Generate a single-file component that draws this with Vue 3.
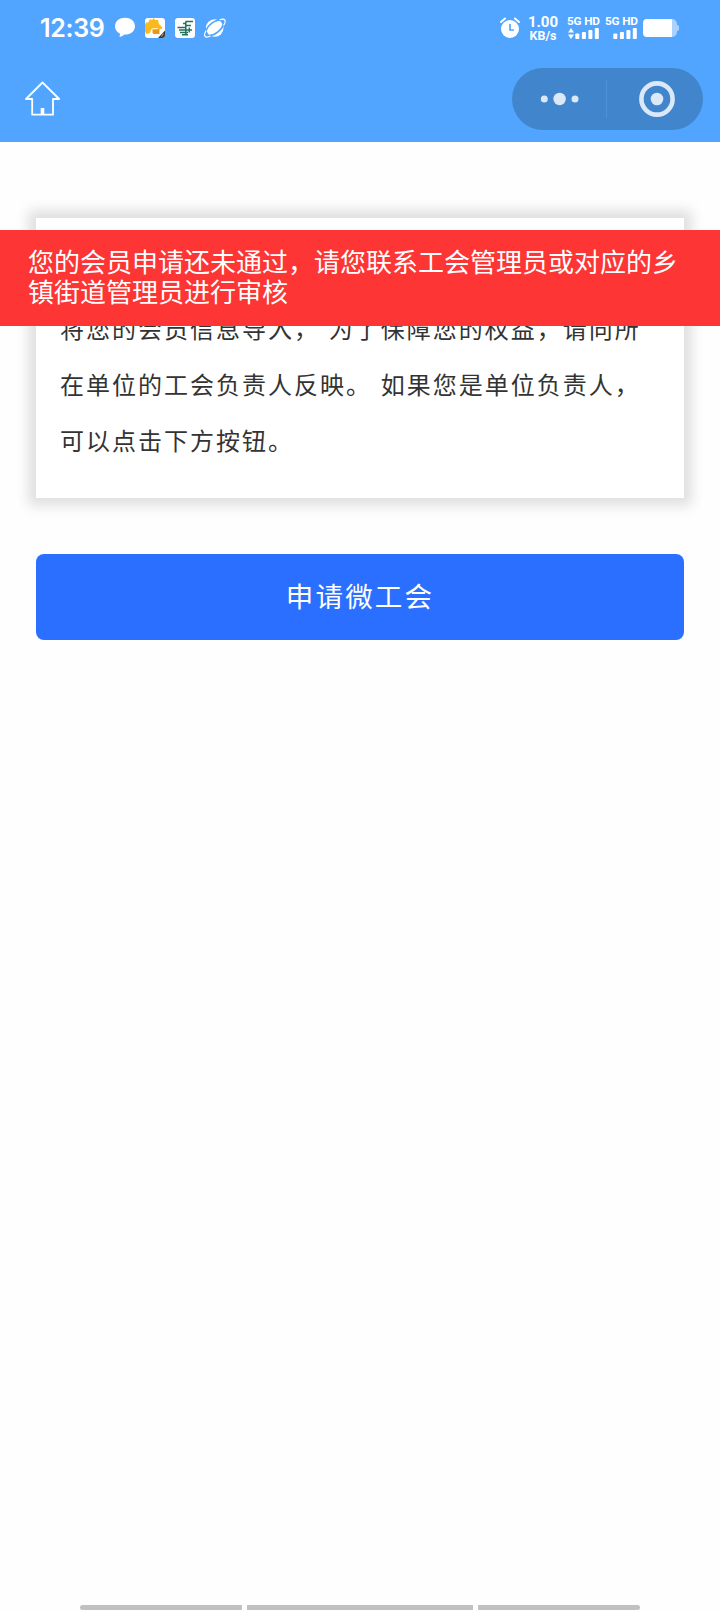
<script setup>
  import { ref } from 'vue';

  const emit = defineEmits(['goHome', 'apply']);

  const time = ref('12:39');
  const speed = ref({ value: '1.00', unit: 'KB/s' });
  const toast = ref('您的会员申请还未通过，请您联系工会管理员或对应的乡镇街道管理员进行审核');
  const notice = [
    '将您的会员信息导入， 为了保障您的权益，请向所',
    '在单位的工会负责人反映。 如果您是单位负责人，',
    '可以点击下方按钮。',
  ];
</script>

<template>
  <div class="page">
    <header class="header">
      <div class="status">
        <span class="status__time">{{ time }}</span>
        <svg class="status__apps" width="112" height="24" viewBox="0 0 112 24">
          <path d="M10 1.800C4.500 1.800 0 5.300 0 10.200c0 3.600 2.200 6.200 5 7.500l-.4 3.300c2-.5 3.700-1.500 4.800-2.500C15.600 18.700 20 15.200 20 10.200 20 5.300 15.500 1.800 10 1.800z" fill="#fff" />
          <rect x="30" y="2" width="20" height="20" rx="3" fill="#fff" />
          <path d="M30 8l2-2 1 1 2-4 2 1 2-2 1 2h3l1 4 3 3v2h-7l-4 1-1 3-4 1-1-3z" fill="#f9b91f" />
          <path d="M37.500 13.500l7-.5v5h-6l-1-1.500z" fill="#f0951c" />
          <path d="M36 14l2-1.500h5" fill="none" stroke="#fff0b8" stroke-width="1" />
          <path d="M50 14.500V19a3 3 0 0 1-3 3h-4z" fill="#3c3432" />
          <path d="M46.500 20.500l2-3" stroke="#a1988e" stroke-width="1.200" />
          <rect x="60" y="2" width="20" height="20" rx="3" fill="#fff" />
          <path d="M70.500 5.500H78M68 7.500h3M70 9.500h6M62.500 11.500h9M64 14h13M65 16.500h8M67 18.800h6M70.800 5.500v13M74.300 11.500v5" fill="none" stroke="#22725b" stroke-width="1.500" />
          <circle cx="99.700" cy="12" r="8.800" fill="#fff" />
          <path d="M92.500 19.500C99 20.500 108.500 13.500 108.500 6" fill="none" stroke="#52a5ff" stroke-width="1.700" />
          <path d="M91 16.500C91 11 98 4.500 105 4" fill="none" stroke="#52a5ff" stroke-width="1.500" />
          <path d="M91.200 14.500C87.500 20.500 90.500 22.500 95.500 20M104.500 3.800C110.500 1.500 111.500 5 108.500 9.500" fill="none" stroke="#fff" stroke-width="1.200" />
        </svg>

        <svg class="status__alarm" width="20" height="22" viewBox="0 0 20 22">
          <circle cx="10" cy="12" r="9" fill="#fff" />
          <path d="M1 5l4-3.500M19 5l-4-3.500" stroke="#fff" stroke-width="2" stroke-linecap="round" />
          <path d="M10 7v6h4" fill="none" stroke="#52a5ff" stroke-width="1.700" />
        </svg>
        <span class="status__speed">
          <b>{{ speed.value }}</b>
          <span>{{ speed.unit }}</span>
        </span>
        <span v-for="sim in 2" :key="sim" class="signal">
          <span>5G HD</span>
          <svg width="32" height="12" viewBox="0 0 32 12" fill="#fff">
            <path v-if="sim === 1" d="M4 0l3 4.500H1zM4 11L1 6.500h6z" />
            <rect x="8.300" y="5.500" width="4" height="5.500" rx=".8" />
            <rect x="14.900" y="4" width="4" height="7" rx=".8" />
            <rect x="21.400" y="2" width="4" height="9" rx=".8" />
            <rect x="27.800" y="0" width="4" height="11" rx=".8" />
          </svg>
        </span>
        <svg class="status__battery" width="36" height="18" viewBox="0 0 36 18">
          <path d="M4 0h25a5 5 0 0 1 5 5v1c2 0 2 1 2 3s0 3-2 3v1a5 5 0 0 1-5 5H4z" fill="#a9d2ff" />
          <path d="M4 0h25v18H4a4 4 0 0 1-4-4V4a4 4 0 0 1 4-4z" fill="#fff" />
        </svg>
      </div>

      <div class="nav">
        <svg class="nav__home" width="36" height="36" viewBox="0 0 36 36" fill="none" stroke="#fff" stroke-width="1.800" stroke-linejoin="round" @click="emit('goHome')">
          <path d="M18.500 1.500L2 18h6.200v15.700h20.800V18h6.200z" />
          <path d="M18.500 27v6" stroke-width="3.600" />
        </svg>
        <div class="capsule">
          <svg width="94" height="62" viewBox="0 0 94 62" fill="#dbe8f7">
            <circle cx="32.300" cy="31" r="3.500" />
            <circle cx="47.600" cy="31" r="6.200" />
            <circle cx="63" cy="31" r="3.500" />
          </svg>
          <span class="capsule__line"></span>
          <svg width="96" height="62" viewBox="0 0 96 62">
            <circle cx="50" cy="31" r="15.600" fill="none" stroke="#dbe8f7" stroke-width="4.600" />
            <circle cx="50" cy="31" r="6.300" fill="#dbe8f7" />
          </svg>
        </div>
      </div>
    </header>

    <div class="toast">{{ toast }}</div>

    <main class="main">
      <section class="card">
        <p v-for="line in notice" :key="line" class="card__line">{{ line }}</p>
      </section>
      <button class="apply" @click="emit('apply')">申请微工会</button>
    </main>

    <footer class="gesture">
      <span class="gesture__bar"></span>
      <span class="gesture__bar gesture__bar--middle"></span>
      <span class="gesture__bar"></span>
    </footer>
  </div>
</template>

<style>
body {
  margin: 0;
  background: #fefefe;
}
</style>

<style scoped>
.page {
  position: relative;
  display: flex;
  flex-direction: column;
  width: 720px;
  height: 1612px;
  overflow: hidden;
  font-family: "Liberation Sans", "Noto Sans CJK SC", sans-serif;
  background: #fefefe;
}

.header {
  height: 142px;
  background: #52a5ff;
}

.status {
  display: flex;
  align-items: center;
  box-sizing: border-box;
  height: 56px;
  padding-left: 40px;
  color: #fff;
  font-family: Inter, sans-serif;
}

.status__time {
  width: 75px;
  font-size: 25px;
  font-weight: 600;
  letter-spacing: -0.3px;
  white-space: nowrap;
}

.status__alarm {
  margin-left: 273px;
}

.status__speed {
  display: flex;
  flex-direction: column;
  align-items: center;
  width: 32px;
  margin-left: 7px;
  font-family: Roboto, sans-serif;
  font-size: 12.500px;
  font-weight: 700;
  line-height: 13px;
  white-space: nowrap;
}

.status__speed b {
  font-size: 15px;
  font-weight: 700;
  line-height: 14px;
}

.signal {
  display: flex;
  flex-direction: column;
  gap: 1px;
  width: 32px;
  margin-left: 8px;
  font-family: Roboto, sans-serif;
  font-size: 11.800px;
  font-weight: 700;
  letter-spacing: -0.2px;
  line-height: 11px;
  white-space: nowrap;
}

.signal + .signal {
  margin-left: 6px;
}

.status__battery {
  margin-left: 6px;
}

.nav {
  display: flex;
  justify-content: space-between;
  padding: 12px 17px 0 24px;
}

.nav__home {
  margin-top: 13px;
}

.capsule {
  display: flex;
  align-items: center;
  width: 191px;
  height: 62px;
  border-radius: 31px;
  background: #4185cc;
}

.capsule__line {
  width: 1px;
  height: 38px;
  background: #4e91d8;
}

.toast {
  position: absolute;
  top: 230px;
  left: 0;
  z-index: 1;
  box-sizing: border-box;
  width: 100%;
  height: 96px;
  padding: 18px 28px;
  color: #fff;
  font-size: 26px;
  line-height: 30px;
  background: #fd3535;
}

.main {
  display: flex;
  flex: 1;
  flex-direction: column;
  padding: 76px 36px 0;
}

.card {
  box-sizing: border-box;
  height: 280px;
  padding: 84px 24px 0;
  background: #fff;
  box-shadow: 0 0 12px 8px rgba(0, 0, 0, 0.12);
}

.card__line {
  margin: 0;
  color: #333;
  font-size: 24px;
  letter-spacing: 2px;
  line-height: 56px;
  white-space: nowrap;
}

.apply {
  height: 86px;
  margin-top: 56px;
  padding: 0 0 4px;
  border: 0;
  border-radius: 8px;
  color: #fff;
  font-family: inherit;
  font-size: 27.500px;
  letter-spacing: 2.200px;
  background: #2a6fff;
}

.gesture {
  display: flex;
  gap: 5px;
  justify-content: center;
  padding-bottom: 2px;
}

.gesture__bar {
  width: 162px;
  height: 5px;
  border-radius: 3px 0 0 3px;
  background: #c1c1c1;
}

.gesture__bar--middle {
  width: 226px;
  border-radius: 0;
}

.gesture__bar:last-child {
  border-radius: 0 3px 3px 0;
}
</style>
